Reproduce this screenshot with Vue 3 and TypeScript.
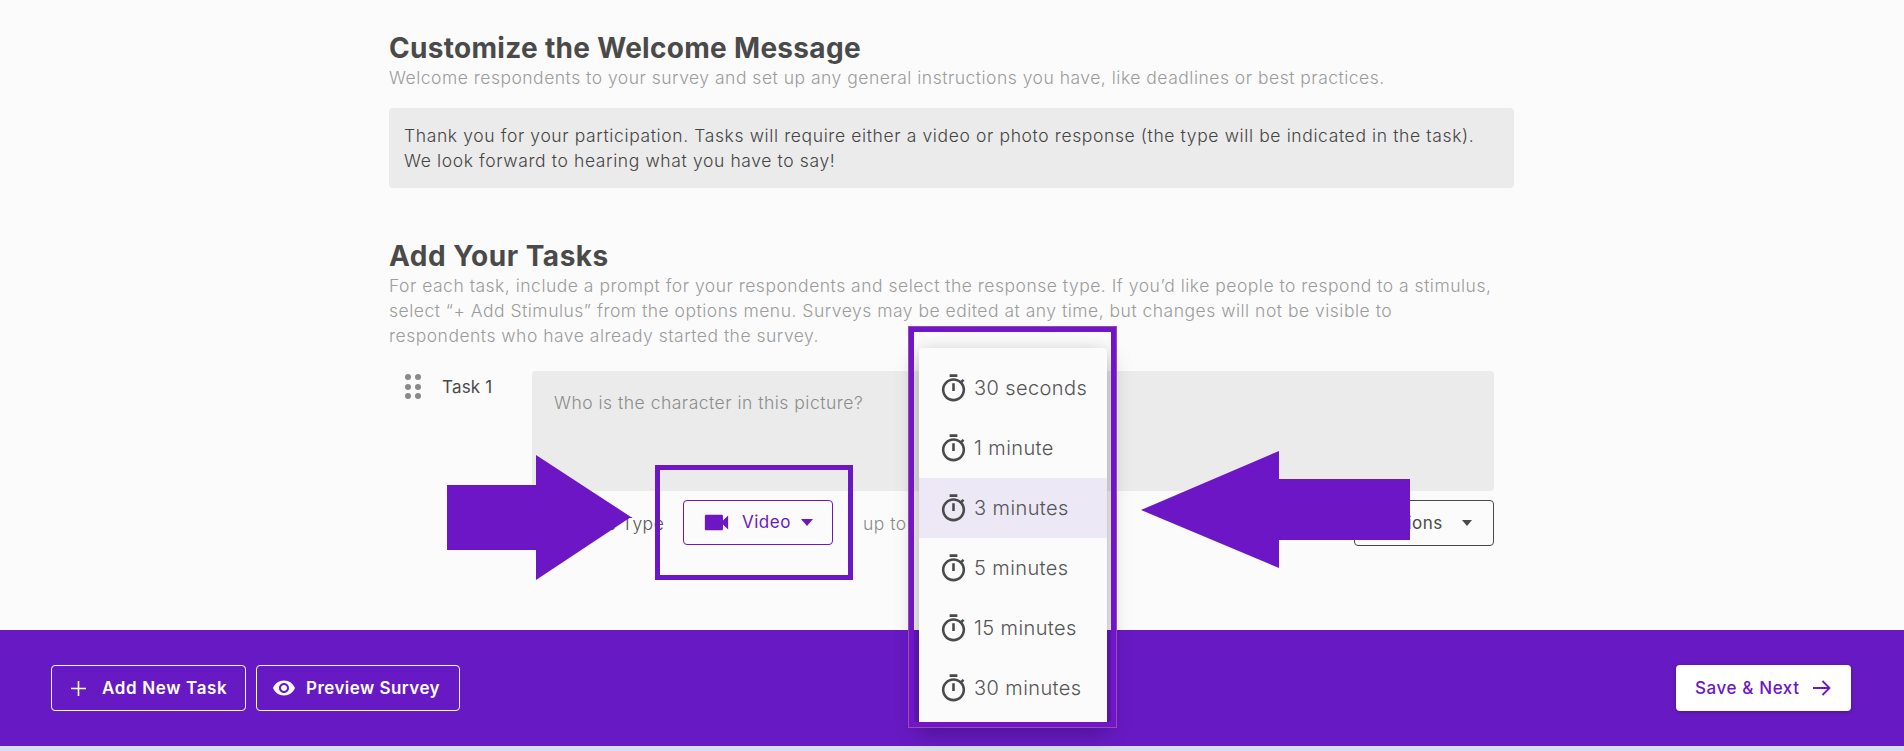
<script setup lang="ts">
const durations: string[] = ['30 seconds', '1 minute', '3 minutes', '5 minutes', '15 minutes', '30 minutes']
const selected = '3 minutes'
const dots: number[] = [1, 2, 3, 4, 5, 6]
</script>

<template>
  <div class="page">
    <main class="main">
      <section class="content">
        <h2 class="title">Customize the Welcome Message</h2>
        <p class="hint">Welcome respondents to your survey and set up any general instructions you have, like deadlines or best practices.</p>
        <div class="welcome">Thank you for your participation. Tasks will require either a video or photo response (the type will be indicated in the task). We look forward to hearing what you have to say!</div>

        <h2 class="title second">Add Your Tasks</h2>
        <p class="hint narrow">For each task, include a prompt for your respondents and select the response type. If you’d like people to respond to a stimulus, select “+ Add Stimulus” from the options menu. Surveys may be edited at any time, but changes will not be visible to respondents who have already started the survey.</p>

        <div class="task">
          <div class="task-head">
            <div class="grip"><span v-for="d in dots" :key="d" class="dot"></span></div>
            <span class="task-label">Task 1</span>
          </div>
          <div class="task-body">
            <div class="prompt">Who is the character in this picture?</div>
            <div class="controls">
              <span class="muted type-label">Response Type</span>
              <button class="btn-video" type="button">
                <svg class="video-icon" viewBox="0 0 24 24"><path d="M17 10.5V7c0-.55-.45-1-1-1H4c-.55 0-1 .45-1 1v10c0 .55.45 1 1 1h12c.55 0 1-.45 1-1v-3.5l4 4v-11l-4 4z" /></svg>
                <span>Video</span>
                <span class="caret"></span>
              </button>
              <span class="muted up-to">up to</span>
              <button class="btn-options" type="button">
                <span>Options</span>
                <span class="caret"></span>
              </button>
            </div>
          </div>
        </div>
      </section>
    </main>

    <footer class="footer">
      <div class="footer-left">
        <button class="btn-ghost add" type="button">
          <svg class="plus" viewBox="0 0 15 15"><path d="M7.5 0v15M0 7.5h15" /></svg>
          <span>Add New Task</span>
        </button>
        <button class="btn-ghost preview" type="button">
          <svg class="eye" viewBox="0 0 24 24"><path d="M12 4.5C7 4.5 2.73 7.61 1 12c1.73 4.39 6 7.5 11 7.5s9.27-3.11 11-7.5c-1.73-4.39-6-7.5-11-7.5zM12 17c-2.76 0-5-2.24-5-5s2.24-5 5-5 5 2.24 5 5-2.24 5-5 5zm0-8c-1.66 0-3 1.34-3 3s1.34 3 3 3 3-1.34 3-3-1.34-3-3-3z" /></svg>
          <span>Preview Survey</span>
        </button>
      </div>
      <button class="btn-save" type="button">
        <span>Save &amp; Next</span>
        <svg class="arrow" viewBox="0 0 18 16"><path d="M0 8h16.5M9.5 1l7 7-7 7" /></svg>
      </button>
    </footer>
    <div class="strip"></div>

    <div class="highlight hl-video"></div>
    <div class="menu">
      <div v-for="d in durations" :key="d" class="menu-item" :class="{ active: d === selected }">
        <svg class="timer" viewBox="0 0 24 24"><path d="M15 1H9v2h6V1zm-4 13h2V8h-2v6zm8.03-6.61l1.42-1.42c-.43-.51-.9-.99-1.41-1.41l-1.42 1.42C16.07 4.74 14.12 4 12 4c-4.97 0-9 4.03-9 9s4.02 9 9 9 9-4.03 9-9c0-2.12-.74-4.07-1.97-5.61zM12 20c-3.87 0-7-3.13-7-7s3.13-7 7-7 7 3.13 7 7-3.13 7-7 7z" /></svg>
        <span>{{ d }}</span>
      </div>
    </div>
    <div class="highlight hl-menu"></div>
    <svg class="pointer pointer-right" viewBox="0 0 184 125"><path d="M0 30h89V0l95 62-95 63V95H0z" /></svg>
    <svg class="pointer pointer-left" viewBox="0 0 269 117"><path d="M0 59 138 0v28h131v61H138v28z" /></svg>
  </div>
</template>

<style>
html, body { margin: 0; }
</style>

<style scoped>
.page {
  position: relative;
  width: 1904px;
  height: 751px;
  overflow: hidden;
  display: flex;
  flex-direction: column;
  background: #fbfbfb;
  font-family: Inter, "Open Sans", sans-serif;
  font-size: 17.5px;
  letter-spacing: 0.5px;
  font-weight: 300;
  line-height: 25px;
  color: #4a4a4a;
}
.main { flex: 1; padding: 33px 390px 0 389px; }
.content { display: flex; flex-direction: column; }
.title {
  margin: 0 0 2px;
  font-size: 28px;
  letter-spacing: 0.3px;
  line-height: 30px;
  font-weight: 700;
  color: #4a4a4a;
}
.second { margin-top: 53px; letter-spacing: 0.5px; }
.hint { margin: 0; color: #9c9c9c; }
.narrow { width: 1115px; }
.welcome {
  margin-top: 18px;
  padding: 15px 30px 15px 15px;
  background: #ebebeb;
  border-radius: 4px;
  color: #454545;
  letter-spacing: 0.62px;
}
.task { display: grid; grid-template-columns: 143px 1fr; margin-top: 23px; padding-right: 20px; }
.task-head { display: flex; align-items: flex-start; padding: 3px 0 0 16px; gap: 21px; }
.grip { display: grid; grid-template-columns: 6px 6px; gap: 3.5px 4px; }
.dot { width: 6px; height: 6px; border-radius: 50%; background: #8a8a8a; }
.task-label { color: #4a4a4a; line-height: 26px; font-size: 17px; font-weight: 400; letter-spacing: 0.2px; }
.prompt {
  height: 120px;
  box-sizing: border-box;
  padding: 19px 22px;
  background: #ebebeb;
  border-radius: 4px;
  color: #8c8c8c;
}
.controls { display: flex; align-items: center; margin-top: 9px; height: 46px; }
.muted { color: #8a8a8a; }
.type-label { width: 130px; text-align: right; white-space: nowrap; flex: none; color: #555; }
.up-to { margin-left: 30px; }
button { font: inherit; letter-spacing: inherit; cursor: pointer; }
.btn-video {
  display: flex;
  align-items: center;
  align-self: flex-start;
  box-sizing: border-box;
  width: 150px;
  height: 45px;
  margin-left: 21px;
  padding: 0 0 0 17px;
  background: transparent;
  border: 1px solid #6c16c6;
  border-radius: 4px;
  color: #6c16c6;
  font-size: 17px;
  font-weight: 400;
}
.video-icon { width: 31px; height: 31px; fill: #6c16c6; margin-right: 10px; flex: none; }
.btn-video .caret { margin-left: 10px; border-left-width: 6px; border-right-width: 6px; border-top: 7px solid #6c16c6; }
.caret {
  width: 0;
  height: 0;
  border-left: 5.5px solid transparent;
  border-right: 5.5px solid transparent;
  border-top: 6px solid #4a4a4a;
  flex: none;
}
.btn-options {
  display: flex;
  align-items: center;
  box-sizing: border-box;
  width: 140px;
  height: 46px;
  margin-left: auto;
  padding: 0 21px 0 22px;
  justify-content: space-between;
  background: transparent;
  border: 1px solid #4a4a4a;
  border-radius: 4px;
  color: #4a4a4a;
  font-size: 17px;
  font-weight: 400;
}
.footer {
  height: 116px;
  flex: none;
  display: flex;
  align-items: center;
  justify-content: space-between;
  padding: 0 53px 0 51px;
  background: #671ac3;
}
.footer-left { display: flex; gap: 10px; }
.btn-ghost {
  display: flex;
  align-items: center;
  box-sizing: border-box;
  height: 46px;
  background: transparent;
  border: 1px solid #fff;
  border-radius: 4px;
  color: #fff;
  font-size: 17px;
  font-weight: 600;
}
.add { width: 195px; padding: 0 0 0 19px; gap: 16px; letter-spacing: 0.65px; }
.preview { width: 204px; padding: 0 0 0 15px; gap: 10px; letter-spacing: 0.45px; }
.plus { width: 15px; height: 15px; stroke: #fff; stroke-width: 1.6; fill: none; }
.eye { width: 24px; height: 24px; fill: #fff; }
.btn-save {
  display: flex;
  align-items: center;
  gap: 13px;
  box-sizing: border-box;
  width: 175px;
  height: 46px;
  padding: 0 0 0 19px;
  background: #fff;
  border: 0;
  border-radius: 4px;
  color: #6c16c6;
  font-size: 17px;
  letter-spacing: 0.6px;
  font-weight: 500;
  box-shadow: 0 1px 4px rgba(0, 0, 0, 0.3);
}
.arrow { width: 18px; height: 16px; stroke: #6c16c6; stroke-width: 1.8; fill: none; }
.strip { height: 5px; flex: none; background: #d6dfea; }

.highlight { position: absolute; box-sizing: border-box; }
.hl-video { left: 655px; top: 465px; width: 198px; height: 115px; border: 5px solid #6c16c6; }
.hl-menu {
  left: 908px;
  top: 326px;
  width: 209px;
  height: 402px;
  border: 6px solid #7015c8;
  outline: 1px solid #9a4ca8;
  outline-offset: -1px;
}
.menu {
  position: absolute;
  left: 919px;
  top: 348px;
  width: 188px;
  box-sizing: border-box;
  padding: 10px 0 4px;
  background: #fbfbfb;
  border-radius: 4px 4px 0 0;
  box-shadow: 0 8px 22px rgba(0, 0, 0, 0.35);
}
.menu-item {
  display: flex;
  align-items: center;
  height: 60px;
  padding-left: 19px;
  gap: 5px;
  color: #555;
  font-size: 20px;
  letter-spacing: 0.4px;
}
.menu-item.active { background: #ece8f6; }
.timer { width: 31px; height: 31px; fill: #4a4a4a; flex: none; }
.pointer { position: absolute; fill: #6c16c6; }
.pointer-right { left: 447px; top: 455px; width: 184px; height: 125px; }
.pointer-left { left: 1141px; top: 451px; width: 269px; height: 117px; }
</style>
